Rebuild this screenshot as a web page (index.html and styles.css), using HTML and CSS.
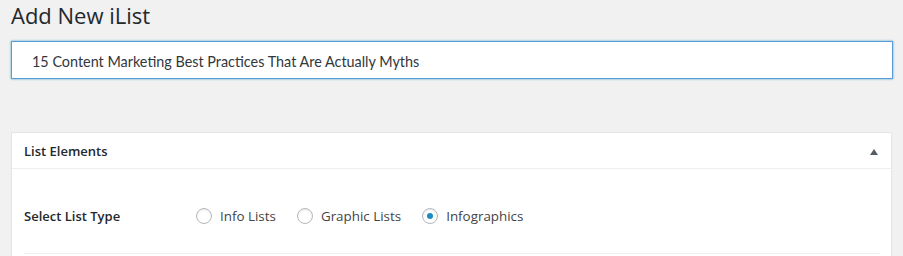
FILE: index.html
```html
<!DOCTYPE html>
<html lang="en">
<head>
    <meta charset="UTF-8">
    <meta name="viewport" content="width=device-width, initial-scale=1.0">
    <title>Add New iList</title>
    <link rel="stylesheet" href="styles.css">
</head>
<body>
    <div class="wrap">
        <h1>Add New iList</h1>

        <!-- Title field -->
        <input type="text" class="title-input" value="15 Content Marketing Best Practices That Are Actually Myths">

        <!-- List Elements box -->
        <div class="postbox">
            <div class="postbox-header">
                <h2>List Elements</h2>
                <span class="toggle"></span>
            </div>
            <div class="inside">
                <div class="field-row">
                    <div class="field-label">Select List Type</div>
                    <div class="radios">
                        <label class="radio"><input type="radio" name="list_type"> Info Lists</label>
                        <label class="radio"><input type="radio" name="list_type"> Graphic Lists</label>
                        <label class="radio"><input type="radio" name="list_type" checked> Infographics</label>
                    </div>
                </div>
            </div>
        </div>
    </div>
</body>
</html>
```

FILE: styles.css
```css
body {
    margin: 0;
    background-color: #f1f1f1;
    font-family: 'Open Sans', sans-serif;
    color: #23282d;
}

.wrap {
    padding: 0 11px 0 11px;
}

h1 {
    margin: 0;
    padding-top: 1px;
    font-size: 22px;
    font-weight: 400;
    line-height: 29px;
    color: #23282d;
}

.title-input {
    display: block;
    box-sizing: border-box;
    width: 882px;
    height: 38px;
    margin-top: 11px;
    padding: 2px 20px 0 20px;
    font-family: 'Lato', sans-serif;
    font-size: 14.4px;
    color: #32373c;
    background-color: #fff;
    border: 1px solid #5b9dd9;
    box-shadow: 0 0 2px rgba(30, 140, 190, 0.8);
    outline: none;
}

.postbox {
    margin-top: 53px;
    width: 881px;
    box-sizing: border-box;
    background-color: #fff;
    border: 1px solid #e5e5e5;
    box-shadow: 0 1px 1px rgba(0, 0, 0, 0.04);
}

.postbox-header {
    display: flex;
    align-items: center;
    justify-content: space-between;
    height: 35px;
    padding: 0 13px 0 12px;
    border-bottom: 1px solid #eee;
}

.postbox-header h2 {
    margin: 0;
    font-size: 13px;
    font-weight: 600;
}

.toggle {
    width: 0;
    height: 0;
    border-left: 4px solid transparent;
    border-right: 4px solid transparent;
    border-bottom: 6px solid #555d66;
    margin-top: 2px;
}

.inside {
    padding: 0 11px 12px 12px;
}

.field-row {
    display: flex;
    align-items: center;
    box-sizing: border-box;
    height: 85px;
    padding-top: 9px;
    border-bottom: 1px solid #eee;
}

.field-label {
    width: 172px;
    font-size: 13px;
    font-weight: 600;
}

.radios {
    display: flex;
    gap: 21px;
}

.radio {
    display: flex;
    align-items: center;
    gap: 8px;
    font-size: 13.4px;
    color: #444;
}

.radio input {
    appearance: none;
    -webkit-appearance: none;
    margin: 0;
    width: 16px;
    height: 16px;
    border: 1px solid #b4b9be;
    border-radius: 50%;
    background-color: #fff;
    box-shadow: inset 0 1px 2px rgba(0, 0, 0, 0.1);
    display: flex;
    align-items: center;
    justify-content: center;
}

.radio input:checked::before {
    content: "";
    width: 6px;
    height: 6px;
    border-radius: 50%;
    background-color: #1e8cbe;
}
```
